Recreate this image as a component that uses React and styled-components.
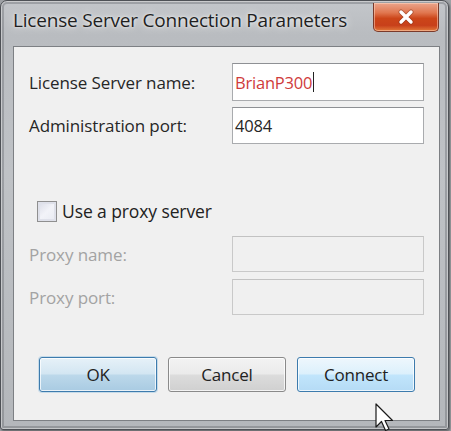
import React from "react";
import styled, { createGlobalStyle } from "styled-components";

const Global = createGlobalStyle`
  html, body { margin: 0; padding: 0; width: 451px; height: 431px; overflow: hidden; background: #9ea1a5; }
  #root { width: 451px; height: 431px; }
`;

const Window = styled.div`
  position: relative;
  box-sizing: border-box;
  width: 449px;
  height: 430px;
  border: 1px solid #4e5156;
  border-radius: 7px 7px 3px 3px;
  background: linear-gradient(180deg, #c3c6ca 0%, #b9bcc0 8%, #bfc2c6 40%, #b4b7bb 100%);
  box-shadow: inset 0 0 0 1px rgba(255,255,255,0.45), inset 0 0 0 3px rgba(90,93,98,0.35), 1px 1px 2px rgba(0,0,0,0.4);
  display: flex;
  flex-direction: column;
  font-family: "Open Sans", "Noto Sans", sans-serif;
`;

const TitleBar = styled.div`
  height: 45px;
  display: flex;
  align-items: flex-start;
  justify-content: space-between;
  padding: 0 9px 0 12px;
`;

const Title = styled.div`
  margin-top: 6px;
  font-size: 19px;
  letter-spacing: -0.2px;
  color: #1f1f1f;
  text-shadow: 0 0 8px rgba(255,255,255,0.9), 0 0 3px rgba(255,255,255,0.8);
`;

const CloseButton = styled.div`
  margin-top: 2px;
  width: 66px;
  height: 29px;
  box-sizing: border-box;
  border: 1px solid #7a3a2a;
  border-top: none;
  border-radius: 0 0 5px 5px;
  background: linear-gradient(180deg, #eba58c 0%, #e0764f 35%, #cc4519 55%, #c8401a 80%, #e2793a 100%);
  box-shadow: inset 0 0 0 1px rgba(255,220,200,0.5);
  display: flex;
  align-items: center;
  justify-content: center;
`;

const Client = styled.div`
  position: relative;
  box-sizing: border-box;
  margin: 0 8px 0 12px;
  height: 375px;
  border: 1px solid #7d8084;
  background: #f0f0f0;
  padding: 16px 15px 0 15px;
  display: flex;
  flex-direction: column;
`;

const FieldRow = styled.div`
  display: grid;
  grid-template-columns: 203px 192px;
  align-items: center;
  margin-top: ${(p) => p.$gap || 0}px;
`;

const Label = styled.div`
  font-size: 17px;
  letter-spacing: -0.1px;
  color: ${(p) => (p.$disabled ? "#a3a3a3" : "#262626")};
`;

const Input = styled.div`
  box-sizing: border-box;
  height: ${(p) => p.$h || 37}px;
  border: 1px solid ${(p) => (p.$disabled ? "#c9c9c9" : "#a9abae")};
  border-top-color: ${(p) => (p.$disabled ? "#c2c2c2" : "#8e9094")};
  background: ${(p) => (p.$disabled ? "#f0f0f0" : "#ffffff")};
  padding: 0 2px;
  display: flex;
  align-items: center;
  font-size: 16.5px;
  letter-spacing: -0.2px;
  color: ${(p) => p.$color || "#262626"};
`;

const Caret = styled.span`
  display: inline-block;
  width: 1px;
  height: 20px;
  background: #222;
  margin-left: 1px;
`;

const CheckRow = styled.label`
  display: flex;
  align-items: center;
  gap: 5px;
  margin: 55px 0 0 8px;
  font-size: 17.5px;
  letter-spacing: -0.1px;
  color: #222;
`;

const CheckBox = styled.span`
  box-sizing: border-box;
  width: 20px;
  height: 21px;
  border: 1px solid #8f8f8f;
  background: linear-gradient(135deg, #d9dbe6 0%, #f2f3f8 50%, #e8eaf2 100%);
  box-shadow: inset 0 0 0 2px #dfe1ea;
`;

const ButtonRow = styled.div`
  display: flex;
  gap: 11px;
  margin: 42px 0 0 10px;
`;

const Button = styled.div`
  box-sizing: border-box;
  width: 118px;
  height: 35px;
  border-radius: 3px;
  border: 1px solid ${(p) => (p.$variant === "plain" ? "#8a8a8a" : "#3d7bad")};
  background: ${(p) =>
    p.$variant === "hover"
      ? "linear-gradient(180deg, #eef7fd 0%, #dcf0fc 48%, #c1e5fc 52%, #b5dbf5 100%)"
      : p.$variant === "default"
      ? "linear-gradient(180deg, #e6f1f8 0%, #d3e6f2 48%, #bcd8ea 52%, #a9cbe2 100%)"
      : "linear-gradient(180deg, #f3f3f3 0%, #ebebeb 48%, #dcdcdc 52%, #d0d0d0 100%)"};
  box-shadow: inset 0 0 0 1px rgba(255,255,255,0.75)${(p) => (p.$variant === "default" ? ", 0 0 0 1px rgba(120,180,220,0.35)" : "")};
  display: flex;
  align-items: center;
  justify-content: center;
  font-size: 17px;
  letter-spacing: -0.2px;
  color: #222;
`;

const Pointer = styled.svg`
  position: absolute;
  left: 361px;
  top: 356px;
`;

export default function App() {
  return (
    <>
      <Global />
      <Window>
        <TitleBar>
          <Title>License Server Connection Parameters</Title>
          <CloseButton>
            <svg width="18" height="16" viewBox="0 0 18 16">
              <path d="M4 3 L14 13 M14 3 L4 13" stroke="#7a2a14" strokeWidth="5" strokeLinecap="round" opacity="0.45" />
              <path d="M4 3 L14 13 M14 3 L4 13" stroke="#ffffff" strokeWidth="3.4" strokeLinecap="round" />
            </svg>
          </CloseButton>
        </TitleBar>
        <Client>
          <FieldRow>
            <Label>License Server name:</Label>
            <Input $h={38} $color="#cf3b3b">
              BrianP300<Caret />
            </Input>
          </FieldRow>
          <FieldRow $gap={6}>
            <Label>Administration port:</Label>
            <Input>4084</Input>
          </FieldRow>
          <CheckRow>
            <CheckBox />
            Use a proxy server
          </CheckRow>
          <FieldRow $gap={13}>
            <Label $disabled>Proxy name:</Label>
            <Input $h={36} $disabled />
          </FieldRow>
          <FieldRow $gap={7}>
            <Label $disabled>Proxy port:</Label>
            <Input $h={36} $disabled />
          </FieldRow>
          <ButtonRow>
            <Button $variant="default">OK</Button>
            <Button $variant="plain">Cancel</Button>
            <Button $variant="hover">Connect</Button>
          </ButtonRow>
          <Pointer width="20" height="30" viewBox="0 0 20 30">
            <path d="M1 1 L1 24 L6.5 18.5 L10.5 27.5 L14 26 L10 17.5 L17.5 17.5 Z" fill="#ffffff" stroke="#1a1a1a" strokeWidth="1.2" strokeLinejoin="round" />
          </Pointer>
        </Client>
      </Window>
    </>
  );
}
